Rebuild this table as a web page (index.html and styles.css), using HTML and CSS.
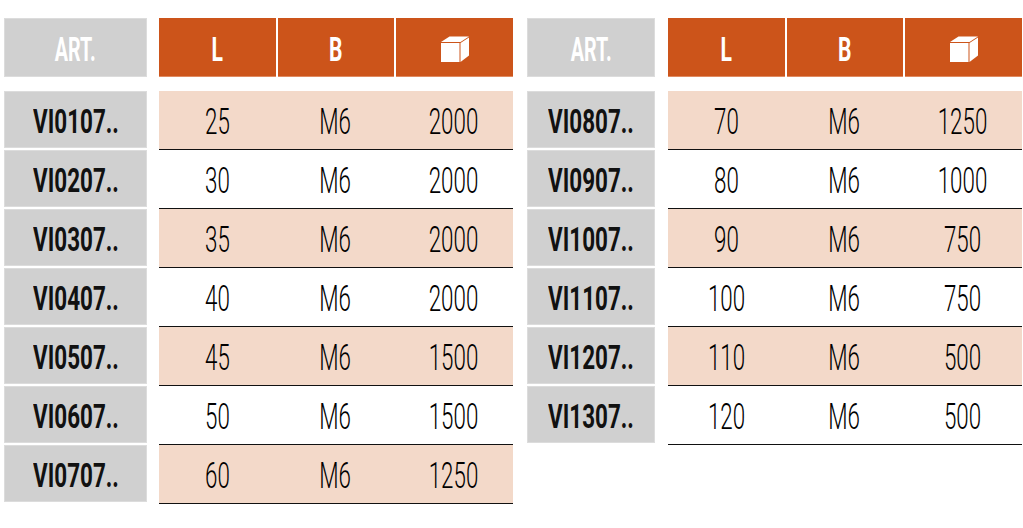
FILE: index.html
```html
<!DOCTYPE html>
<html>
<head>
<meta charset="utf-8">
<link rel="stylesheet" href="styles.css">
</head>
<body>
<div class="page">
  <section class="tbl tbl-left">
    <div class="art-head"><span>ART.</span></div>
    <div class="head">
      <div class="hc"><span>L</span></div>
      <div class="hc"><span>B</span></div>
      <div class="hc"><svg class="box" width="30" height="26" viewBox="0 0 30 26"><polygon points="1,6 9.5,0.5 29,0.5 20.5,6" fill="#fff"/><rect x="1" y="7" width="18.5" height="19" fill="#fff"/><polygon points="20.5,7 29,1.5 29,19.5 20.5,26" fill="#fff"/></svg></div>
    </div>
    <div class="art"><span>VI0107..</span></div>
    <div class="row odd"><span>25</span><span>M6</span><span>2000</span></div>
    <div class="art"><span>VI0207..</span></div>
    <div class="row"><span>30</span><span>M6</span><span>2000</span></div>
    <div class="art"><span>VI0307..</span></div>
    <div class="row odd"><span>35</span><span>M6</span><span>2000</span></div>
    <div class="art"><span>VI0407..</span></div>
    <div class="row"><span>40</span><span>M6</span><span>2000</span></div>
    <div class="art"><span>VI0507..</span></div>
    <div class="row odd"><span>45</span><span>M6</span><span>1500</span></div>
    <div class="art"><span>VI0607..</span></div>
    <div class="row"><span>50</span><span>M6</span><span>1500</span></div>
    <div class="art"><span>VI0707..</span></div>
    <div class="row odd"><span>60</span><span>M6</span><span>1250</span></div>
  </section>
  <section class="tbl tbl-right">
    <div class="art-head"><span>ART.</span></div>
    <div class="head">
      <div class="hc"><span>L</span></div>
      <div class="hc"><span>B</span></div>
      <div class="hc"><svg class="box" width="30" height="26" viewBox="0 0 30 26"><polygon points="1,6 9.5,0.5 29,0.5 20.5,6" fill="#fff"/><rect x="1" y="7" width="18.5" height="19" fill="#fff"/><polygon points="20.5,7 29,1.5 29,19.5 20.5,26" fill="#fff"/></svg></div>
    </div>
    <div class="art"><span>VI0807..</span></div>
    <div class="row odd"><span>70</span><span>M6</span><span>1250</span></div>
    <div class="art"><span>VI0907..</span></div>
    <div class="row"><span>80</span><span>M6</span><span>1000</span></div>
    <div class="art"><span>VI1007..</span></div>
    <div class="row odd"><span>90</span><span>M6</span><span>750</span></div>
    <div class="art"><span>VI1107..</span></div>
    <div class="row"><span>100</span><span>M6</span><span>750</span></div>
    <div class="art"><span>VI1207..</span></div>
    <div class="row odd"><span>110</span><span>M6</span><span>500</span></div>
    <div class="art"><span>VI1307..</span></div>
    <div class="row"><span>120</span><span>M6</span><span>500</span></div>
  </section>
</div>
</body>
</html>
```

FILE: styles.css
```css
* { box-sizing: border-box; }
html, body { margin: 0; padding: 0; background: #fff; }
body { font-family: Roboto, "Liberation Sans", sans-serif; width: 1023px; height: 528px; overflow: hidden; }

.page {
  display: flex;
  align-items: flex-start;
  gap: 14px;
  padding: 18px 0 0 4px;
}

.tbl {
  display: grid;
  align-content: start;
}
.tbl-left { grid-template-columns: 143px 354px; column-gap: 12px; }
.tbl-right { grid-template-columns: 128px 354px; column-gap: 13px; }

.art-head {
  height: 59px;
  margin-bottom: 14px;
  background: #d0d0d0;
  box-shadow: inset 0 0 0 1px #dcdcdc;
  display: flex;
  align-items: center;
  justify-content: center;
  padding-top: 2px;
}
.art-head span {
  display: inline-block;
  color: #fff;
  font-weight: 700;
  font-size: 34px;
  line-height: 1;
  transform: scaleX(0.58);
}

.head {
  height: 59px;
  margin-bottom: 14px;
  display: grid;
  grid-template-columns: 117px 116px 117px;
  column-gap: 2px;
}
.hc {
  background: #cc541a;
  border-bottom: 1px solid #e08a60;
  display: flex;
  align-items: center;
  justify-content: center;
  padding-top: 3px;
}
.hc span {
  display: inline-block;
  color: #fff;
  font-weight: 700;
  font-size: 34px;
  line-height: 1;
  transform: scaleX(0.62);
}
.hc .box { display: block; }

.art {
  height: 57px;
  margin-bottom: 2px;
  background: #d0d0d0;
  box-shadow: inset 0 0 0 1px #dcdcdc;
  display: flex;
  align-items: center;
  justify-content: center;
  padding-top: 2px;
}
.art span {
  display: inline-block;
  color: #111;
  font-weight: 700;
  font-size: 34px;
  line-height: 1;
  transform: scaleX(0.66);
  white-space: nowrap;
}

.row {
  height: 59px;
  border-bottom: 1px solid #111;
  display: grid;
  grid-template-columns: 117px 118px 119px;
  align-items: center;
  padding-top: 3px;
}
.row.odd { background: #f3d9c9; }
.row span {
  display: block;
  text-align: center;
  color: #000;
  font-weight: 300;
  font-size: 36px;
  line-height: 1;
  transform: scaleX(0.62);
}
```
